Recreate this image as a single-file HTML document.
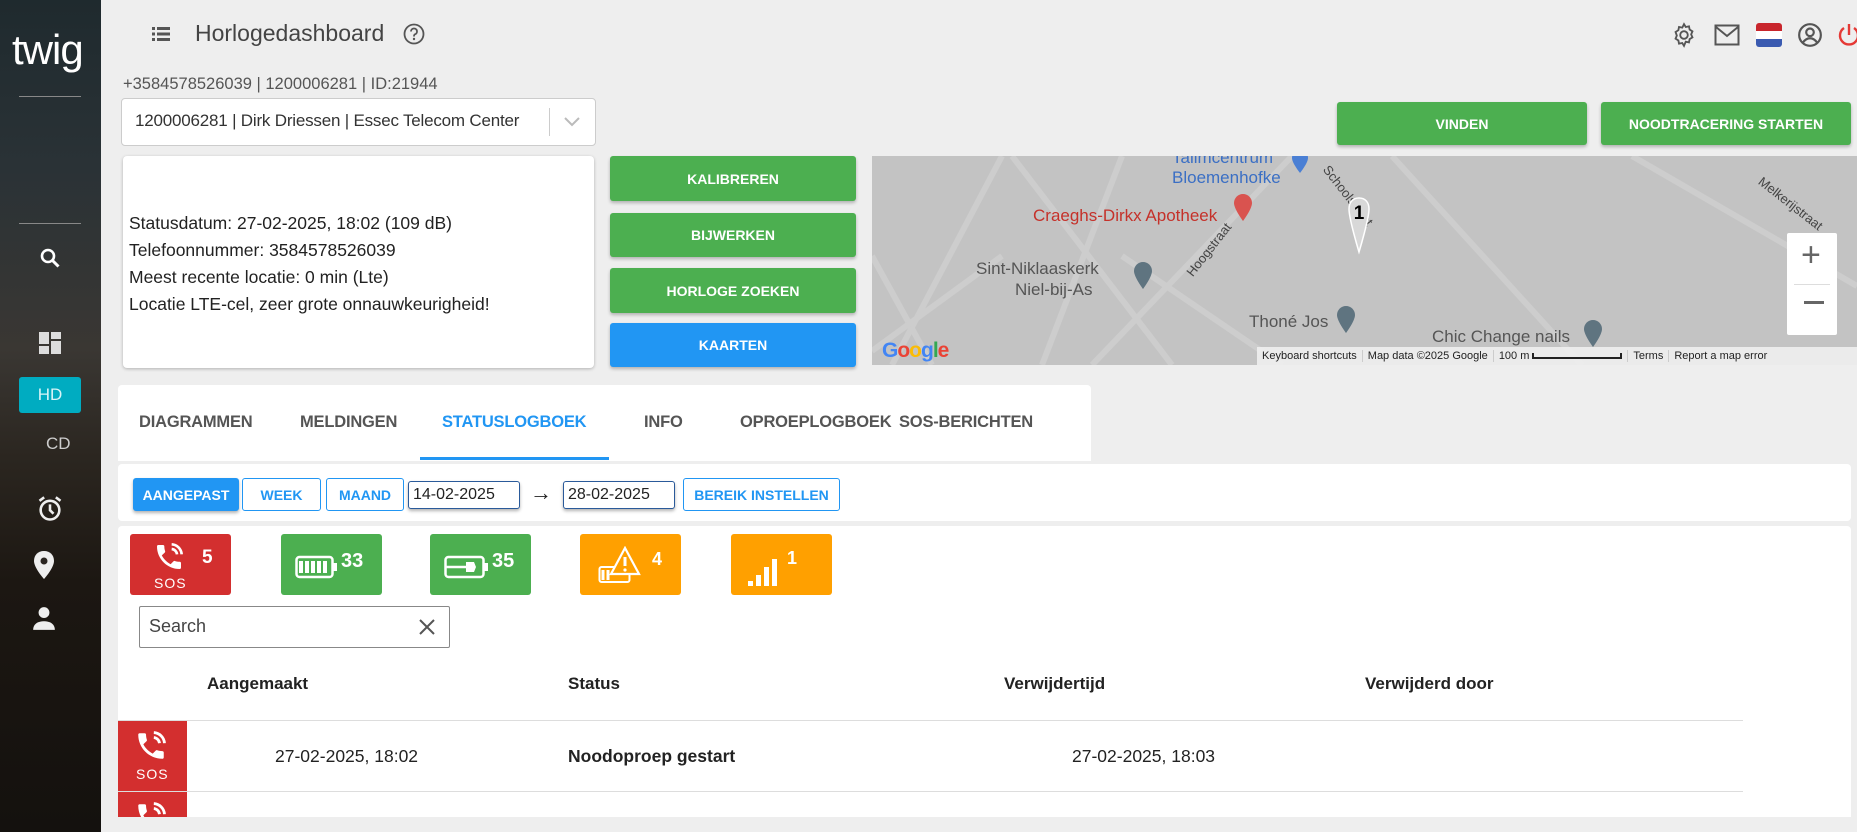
<!DOCTYPE html>
<html><head><meta charset="utf-8">
<style>
*{box-sizing:border-box;margin:0;padding:0}
body{width:1857px;height:832px;overflow:hidden;background:#eeeeee;font-family:"Liberation Sans",sans-serif;position:relative;color:#222}
.abs{position:absolute}
.side{left:0;top:0;width:101px;height:832px;background:linear-gradient(180deg,#1f2a2e 0%,#2a3236 20%,#3a3733 42%,#2b2620 55%,#1c1712 70%,#14110e 100%)}
.btn{position:absolute;color:#fff;font-weight:bold;font-size:14px;display:flex;align-items:center;justify-content:center;border-radius:3px;box-shadow:0 2px 3px rgba(0,0,0,.25)}
.g{background:#4caf50}.b{background:#2196f3}
.card{position:absolute;background:#fff;border-radius:4px}
.tab{position:absolute;top:413px;font-size:16.5px;font-weight:bold;color:#555;letter-spacing:-0.2px}
.ob{position:absolute;top:478px;height:33px;border:1px solid #2196f3;border-radius:3px;color:#2196f3;font-weight:bold;font-size:14px;display:flex;align-items:center;justify-content:center;background:#fff}
.date{position:absolute;top:481px;height:28px;border:1px solid #2a5a9a;border-radius:3px;font-size:16px;padding-left:4px;display:flex;align-items:center;box-shadow:0 2px 3px rgba(0,0,0,.3);background:#fff}
.badge{position:absolute;top:534px;height:61px;width:101px;border-radius:3px;color:#fff;font-weight:bold}
.th{position:absolute;top:674px;font-size:17px;font-weight:bold;color:#222}
.ml{position:absolute;font-size:17px;white-space:nowrap}
.rl{position:absolute;font-size:13px;color:#444;white-space:nowrap;transform-origin:center}
</style></head><body>
<div class="abs side"></div>
<div class="abs" style="left:12px;top:26px;color:#fff;font-size:42px;letter-spacing:-1px">twig</div>
<div class="abs" style="left:19px;top:96px;width:62px;height:1px;background:#888"></div>
<div class="abs" style="left:19px;top:223px;width:62px;height:1px;background:#888"></div>
<svg class="abs" style="left:38px;top:246px" width="24" height="24" viewBox="0 0 24 24"><circle cx="10" cy="10" r="6" fill="none" stroke="#fff" stroke-width="2.6"/><path d="M14.5 14.5l6 6" stroke="#fff" stroke-width="3"/></svg>
<svg class="abs" style="left:38px;top:331px" width="24" height="24" viewBox="0 0 24 24"><path d="M1 1h10v12H1zM13 1h10v7H13zM13 10h10v13H13zM1 15h10v8H1z" fill="#ddd"/></svg>
<div class="abs" style="left:19px;top:377px;width:62px;height:36px;background:#00acc1;border-radius:3px;color:#d8f4f7;font-size:17px;display:flex;align-items:center;justify-content:center">HD</div>
<div class="abs" style="left:46px;top:434px;color:#ccc;font-size:17px">CD</div>
<svg class="abs" style="left:36px;top:495px" width="28" height="28" viewBox="0 0 24 24"><circle cx="12" cy="13" r="8" fill="none" stroke="#eee" stroke-width="2.2"/><path d="M12 8v5l3 3M3 5l4-3M21 5l-4-3" stroke="#eee" stroke-width="2.2" fill="none"/></svg>
<svg class="abs" style="left:32px;top:550px" width="24" height="30" viewBox="0 0 24 30"><path d="M12 1C6 1 2 5 2 11c0 7 10 18 10 18s10-11 10-18C22 5 18 1 12 1z" fill="#eee"/><circle cx="12" cy="11" r="3.5" fill="#2a2520"/></svg>
<svg class="abs" style="left:31px;top:605px" width="26" height="26" viewBox="0 0 24 24"><circle cx="12" cy="7" r="5" fill="#eee"/><path d="M2 23c0-6 5-8 10-8s10 2 10 8z" fill="#eee"/></svg>

<svg class="abs" style="left:152px;top:26px" width="18" height="16" viewBox="0 0 18 16"><path d="M0 1h3v3H0zM5 1h13v3H5zM0 6.5h3v3H0zM5 6.5h13v3H5zM0 12h3v3H0zM5 12h13v3H5z" fill="#555"/></svg>
<div class="abs" style="left:195px;top:20px;font-size:23px;color:#444">Horlogedashboard</div>
<svg class="abs" style="left:403px;top:23px" width="22" height="22" viewBox="0 0 22 22"><circle cx="11" cy="11" r="9.5" fill="none" stroke="#555" stroke-width="1.8"/><path d="M8 8.5a3 3 0 1 1 4 2.8c-1 .4-1 1-1 2.2" fill="none" stroke="#555" stroke-width="1.8"/><circle cx="11" cy="16" r="1.2" fill="#555"/></svg>

<svg class="abs" style="left:1671px;top:22px" width="26" height="26" viewBox="0 0 24 24"><path d="M12 2l1.6 2.6 3-.6.6 3 2.6 1.6-1.2 2.8 1.2 2.8-2.6 1.6-.6 3-3-.6L12 22l-1.6-2.6-3 .6-.6-3-2.6-1.6 1.2-2.8L4.2 9.2 6.8 7.6l.6-3 3 .6z" fill="none" stroke="#555" stroke-width="1.7"/><circle cx="12" cy="12" r="3.5" fill="none" stroke="#555" stroke-width="1.7"/></svg>
<svg class="abs" style="left:1714px;top:24px" width="26" height="22" viewBox="0 0 26 22"><rect x="1.5" y="1.5" width="23" height="19" fill="none" stroke="#555" stroke-width="2"/><path d="M2 3l11 9 11-9" fill="none" stroke="#555" stroke-width="2"/></svg>
<div class="abs" style="left:1756px;top:23px;width:26px;height:24px;border-radius:3px;overflow:hidden"><div style="height:8px;background:#c8252c"></div><div style="height:8px;background:#fff"></div><div style="height:8px;background:#3a5ab0"></div></div>
<svg class="abs" style="left:1797px;top:22px" width="26" height="26" viewBox="0 0 24 24"><circle cx="12" cy="12" r="10" fill="none" stroke="#555" stroke-width="2"/><circle cx="12" cy="9.5" r="3.5" fill="none" stroke="#555" stroke-width="2"/><path d="M5.5 19c2-3 4-4 6.5-4s4.5 1 6.5 4" fill="none" stroke="#555" stroke-width="2"/></svg>
<svg class="abs" style="left:1838px;top:22px" width="22" height="26" viewBox="0 0 22 26"><path d="M6 6a9 9 0 1 0 10 0" fill="none" stroke="#e53935" stroke-width="2.4"/><path d="M11 2v11" stroke="#e53935" stroke-width="2.4"/></svg>

<div class="abs" style="left:123px;top:75px;font-size:16.5px;color:#555">+3584578526039 | 1200006281 | ID:21944</div>
<div class="abs" style="left:121px;top:98px;width:475px;height:48px;background:#fff;border:1px solid #ccc;border-radius:4px"></div>
<div class="abs" style="left:135px;top:111px;font-size:17px;color:#333;letter-spacing:-0.2px">1200006281 | Dirk Driessen | Essec Telecom Center</div>
<div class="abs" style="left:549px;top:108px;width:1px;height:28px;background:#ccc"></div>
<svg class="abs" style="left:563px;top:116px" width="18" height="12" viewBox="0 0 18 12"><path d="M2 2l7 7 7-7" fill="none" stroke="#bbb" stroke-width="2"/></svg>

<div class="card" style="left:123px;top:156px;width:471px;height:212px;box-shadow:0 1px 3px rgba(0,0,0,.25)"></div>
<div class="abs" style="left:129px;top:210px;font-size:17.5px;line-height:27px;color:#222">Statusdatum: 27-02-2025, 18:02 (109 dB)<br>Telefoonnummer: 3584578526039<br>Meest recente locatie: 0 min (Lte)<br>Locatie LTE-cel, zeer grote onnauwkeurigheid!</div>

<div class="btn g" style="left:610px;top:156px;width:246px;height:45px">KALIBREREN</div>
<div class="btn g" style="left:610px;top:213px;width:246px;height:44px">BIJWERKEN</div>
<div class="btn g" style="left:610px;top:268px;width:246px;height:45px">HORLOGE ZOEKEN</div>
<div class="btn b" style="left:610px;top:323px;width:246px;height:44px">KAARTEN</div>
<div class="btn g" style="left:1337px;top:102px;width:250px;height:43px">VINDEN</div>
<div class="btn g" style="left:1601px;top:102px;width:250px;height:43px">NOODTRACERING STARTEN</div>

<div class="abs" style="left:872px;top:156px;width:985px;height:209px;background:#c3c3c3;overflow:hidden">
<svg width="985" height="209" style="position:absolute;left:0;top:0"><g stroke="#cdcdcd" fill="none" stroke-width="6"><path d="M0 100L60 209"/><path d="M130 0L20 209"/><path d="M140 0L300 209"/><path d="M250 0L170 209"/><path d="M420 0L220 209"/><path d="M520 0L710 209"/><path d="M760 0L985 130"/><path d="M0 195L130 100"/><path d="M250 100L410 209"/></g></svg>
<div class="ml" style="left:300px;top:-8px;color:#3b6fc4">Talimcentrum</div>
<div class="ml" style="left:300px;top:12px;color:#3b6fc4">Bloemenhofke</div>
<svg class="abs" style="left:420px;top:-6px" width="16" height="24"><path d="M8 0C3 0 0 3 0 8c0 5 8 15 8 15s8-10 8-15c0-5-3-8-8-8z" fill="#4a7fd4"/></svg>
<div class="ml" style="left:161px;top:50px;color:#c5312a">Craeghs-Dirkx Apotheek</div>
<svg class="abs" style="left:362px;top:38px" width="18" height="28"><path d="M9 0C4 0 0 4 0 9c0 6 9 18 9 18s9-12 9-18c0-5-4-9-9-9z" fill="#d9534f"/></svg>
<div class="ml" style="left:104px;top:103px;color:#555">Sint-Niklaaskerk</div>
<div class="ml" style="left:143px;top:124px;color:#555">Niel-bij-As</div>
<svg class="abs" style="left:262px;top:106px" width="18" height="28"><path d="M9 0C4 0 0 4 0 9c0 6 9 18 9 18s9-12 9-18c0-5-4-9-9-9z" fill="#5f7480"/></svg>
<div class="rl" style="left:305px;top:86px;transform:rotate(-52deg)">Hoogstraat</div>
<div class="rl" style="left:440px;top:32px;transform:rotate(52deg)">Schoolstraat</div>
<div class="rl" style="left:880px;top:40px;transform:rotate(38deg)">Melkerijstraat</div>
<div class="ml" style="left:377px;top:156px;color:#555">Thoné Jos</div>
<svg class="abs" style="left:465px;top:150px" width="18" height="28"><path d="M9 0C4 0 0 4 0 9c0 6 9 18 9 18s9-12 9-18c0-5-4-9-9-9z" fill="#5f7480"/></svg>
<div class="ml" style="left:560px;top:171px;color:#555">Chic Change nails</div>
<svg class="abs" style="left:712px;top:164px" width="18" height="28"><path d="M9 0C4 0 0 4 0 9c0 6 9 18 9 18s9-12 9-18c0-5-4-9-9-9z" fill="#5f7480"/></svg>
<svg class="abs" style="left:475px;top:40px" width="24" height="60"><path d="M12 2C6 2 2 6 2 13c0 10 10 43 10 43s10-33 10-43C22 6 18 2 12 2z" fill="#d8d8d8" stroke="#fff" stroke-width="1.5"/><text x="12" y="23" font-size="19" font-weight="bold" text-anchor="middle" font-family="Liberation Sans">1</text></svg>
<div class="abs" style="left:915px;top:77px;width:50px;height:102px;background:#fff;border-radius:2px"></div>
<div class="abs" style="left:922px;top:128px;width:36px;height:1px;background:#ddd"></div>
<div class="abs" style="left:929px;top:80px;font-size:34px;color:#666">+</div>
<div class="abs" style="left:932px;top:145px;width:20px;height:3px;background:#666"></div>
<div class="abs" style="left:10px;top:183px;font-size:21px;font-weight:bold;letter-spacing:-1px"><span style="color:#4285f4">G</span><span style="color:#ea4335">o</span><span style="color:#fbbc05">o</span><span style="color:#4285f4">g</span><span style="color:#34a853">l</span><span style="color:#ea4335">e</span></div>
<div class="abs" style="left:385px;top:191px;width:600px;height:18px;background:rgba(240,240,240,.9);font-size:11px;color:#222;display:flex;align-items:center;white-space:nowrap">
<span style="padding:0 5px;border-right:1px solid #ccc">Keyboard shortcuts</span><span style="padding:0 5px;border-right:1px solid #ccc">Map data ©2025 Google</span><span style="padding:0 5px;border-right:1px solid #ccc;display:flex;align-items:center">100 m <span style="display:inline-block;width:90px;height:6px;border:2px solid #222;border-top:none;margin-left:3px"></span></span><span style="padding:0 5px;border-right:1px solid #ccc">Terms</span><span style="padding:0 5px">Report a map error</span></div>
</div>

<div class="card" style="left:118px;top:385px;width:973px;height:76px;border-radius:4px 4px 0 0"></div>
<div class="tab" style="left:139px">DIAGRAMMEN</div>
<div class="tab" style="left:300px">MELDINGEN</div>
<div class="tab" style="left:442px;color:#2196f3">STATUSLOGBOEK</div>
<div class="tab" style="left:644px">INFO</div>
<div class="tab" style="left:740px">OPROEPLOGBOEK</div>
<div class="tab" style="left:899px">SOS-BERICHTEN</div>
<div class="abs" style="left:420px;top:457px;width:189px;height:3px;background:#2196f3"></div>

<div class="card" style="left:118px;top:464px;width:1733px;height:57px"></div>
<div class="ob" style="left:133px;width:106px;background:#2196f3;color:#fff;box-shadow:0 2px 3px rgba(0,0,0,.3)">AANGEPAST</div>
<div class="ob" style="left:242px;width:79px">WEEK</div>
<div class="ob" style="left:326px;width:78px">MAAND</div>
<div class="date" style="left:408px;width:112px">14-02-2025</div>
<div class="abs" style="left:530px;top:480px;font-size:22px">→</div>
<div class="date" style="left:563px;width:112px">28-02-2025</div>
<div class="ob" style="left:683px;width:157px">BEREIK INSTELLEN</div>

<div class="card" style="left:118px;top:526px;width:1733px;height:291px;border-radius:4px 4px 0 0"></div>
<div class="badge" style="left:130px;background:#d32f2f">
<svg class="abs" style="left:23px;top:7px" width="32" height="32" viewBox="0 0 24 24"><path d="M6.6 10.8c1.4 2.8 3.8 5.1 6.6 6.6l2.2-2.2c.3-.3.7-.4 1-.2 1.1.4 2.3.6 3.6.6.6 0 1 .4 1 1V20c0 .6-.4 1-1 1C10.6 21 3 13.4 3 4c0-.6.4-1 1-1h3.5c.6 0 1 .4 1 1 0 1.3.2 2.5.6 3.6.1.3 0 .7-.2 1z" fill="#fff"/><path d="M14 2.5a8 8 0 0 1 7.5 7.5M14 6a4.5 4.5 0 0 1 4 4" fill="none" stroke="#fff" stroke-width="2"/></svg>
<div class="abs" style="left:72px;top:13px;font-size:19px">5</div>
<div class="abs" style="left:24px;top:41px;font-size:14px;font-weight:normal;letter-spacing:1px">SOS</div></div>
<div class="badge" style="left:281px;background:#4caf50">
<svg class="abs" style="left:14px;top:21px" width="44" height="24" viewBox="0 0 44 24"><rect x="1.5" y="2" width="36" height="20" rx="3" fill="none" stroke="#fff" stroke-width="2.5"/><path d="M38 8h4v8h-4" fill="#fff"/><path d="M6 6v12M12 6v12M18 6v12M24 6v12M30 6v12" stroke="#fff" stroke-width="4"/></svg>
<div class="abs" style="left:60px;top:16px;font-size:20px">33</div></div>
<div class="badge" style="left:430px;background:#4caf50">
<svg class="abs" style="left:14px;top:21px" width="46" height="24" viewBox="0 0 46 24"><rect x="1.5" y="2" width="38" height="20" rx="3" fill="none" stroke="#fff" stroke-width="2.5"/><path d="M40 8h4v8h-4" fill="#fff"/><path d="M2 12h20" stroke="#fff" stroke-width="2.5"/><path d="M22 7h8l2 5-2 5h-8z" fill="#fff"/></svg>
<div class="abs" style="left:62px;top:16px;font-size:20px">35</div></div>
<div class="badge" style="left:580px;background:#ffa000">
<svg class="abs" style="left:18px;top:12px" width="46" height="40" viewBox="0 0 46 40"><rect x="1.5" y="21" width="30" height="15" rx="2" fill="none" stroke="#fff" stroke-width="2"/><path d="M5 24v10M10 24v10" stroke="#fff" stroke-width="3"/><path d="M27 2L13 28h28z" fill="#ffa000" stroke="#fff" stroke-width="2.2"/><path d="M27 11v9" stroke="#fff" stroke-width="3"/><circle cx="27" cy="24" r="1.6" fill="#fff"/></svg>
<div class="abs" style="left:72px;top:15px;font-size:18px">4</div></div>
<div class="badge" style="left:731px;background:#ffa000">
<svg class="abs" style="left:15px;top:17px" width="40" height="36" viewBox="0 0 40 36"><path d="M2 30h5v5H2zM10 24h5v11h-5zM18 16h5v19h-5zM26 8h5v27h-5z" fill="#fff"/></svg>
<div class="abs" style="left:56px;top:14px;font-size:18px">1</div></div>

<div class="abs" style="left:139px;top:606px;width:311px;height:42px;border:1px solid #888;border-radius:2px;background:#fff"></div>
<div class="abs" style="left:149px;top:616px;font-size:18px;color:#444">Search</div>
<svg class="abs" style="left:418px;top:618px" width="18" height="18" viewBox="0 0 18 18"><path d="M2 2l14 14M16 2L2 16" stroke="#555" stroke-width="2"/></svg>

<div class="th" style="left:207px">Aangemaakt</div>
<div class="th" style="left:568px">Status</div>
<div class="th" style="left:1004px">Verwijdertijd</div>
<div class="th" style="left:1365px">Verwijderd door</div>
<div class="abs" style="left:118px;top:720px;width:1625px;height:1px;background:#ddd"></div>
<div class="abs" style="left:118px;top:721px;width:69px;height:70px;background:#d32f2f"></div>
<svg class="abs" style="left:134px;top:729px" width="34" height="34" viewBox="0 0 24 24"><path d="M6.6 10.8c1.4 2.8 3.8 5.1 6.6 6.6l2.2-2.2c.3-.3.7-.4 1-.2 1.1.4 2.3.6 3.6.6.6 0 1 .4 1 1V20c0 .6-.4 1-1 1C10.6 21 3 13.4 3 4c0-.6.4-1 1-1h3.5c.6 0 1 .4 1 1 0 1.3.2 2.5.6 3.6.1.3 0 .7-.2 1z" fill="#fff"/><path d="M14 2.5a8 8 0 0 1 7.5 7.5M14 6a4.5 4.5 0 0 1 4 4" fill="none" stroke="#fff" stroke-width="2"/></svg>
<div class="abs" style="left:136px;top:766px;font-size:14px;color:#fff;letter-spacing:1px">SOS</div>
<div class="abs" style="left:275px;top:746px;font-size:17.5px">27-02-2025, 18:02</div>
<div class="abs" style="left:568px;top:746px;font-size:17.5px;font-weight:bold">Noodoproep gestart</div>
<div class="abs" style="left:1072px;top:746px;font-size:17.5px">27-02-2025, 18:03</div>
<div class="abs" style="left:118px;top:791px;width:1625px;height:1px;background:#ddd"></div>
<div class="abs" style="left:118px;top:792px;width:69px;height:25px;background:#d32f2f;overflow:hidden"><svg style="position:absolute;left:16px;top:8px" width="34" height="34" viewBox="0 0 24 24"><path d="M6.6 10.8c1.4 2.8 3.8 5.1 6.6 6.6l2.2-2.2c.3-.3.7-.4 1-.2 1.1.4 2.3.6 3.6.6.6 0 1 .4 1 1V20c0 .6-.4 1-1 1C10.6 21 3 13.4 3 4c0-.6.4-1 1-1h3.5c.6 0 1 .4 1 1 0 1.3.2 2.5.6 3.6.1.3 0 .7-.2 1z" fill="#fff"/><path d="M14 2.5a8 8 0 0 1 7.5 7.5M14 6a4.5 4.5 0 0 1 4 4" fill="none" stroke="#fff" stroke-width="2"/></svg></div>
</body></html>
